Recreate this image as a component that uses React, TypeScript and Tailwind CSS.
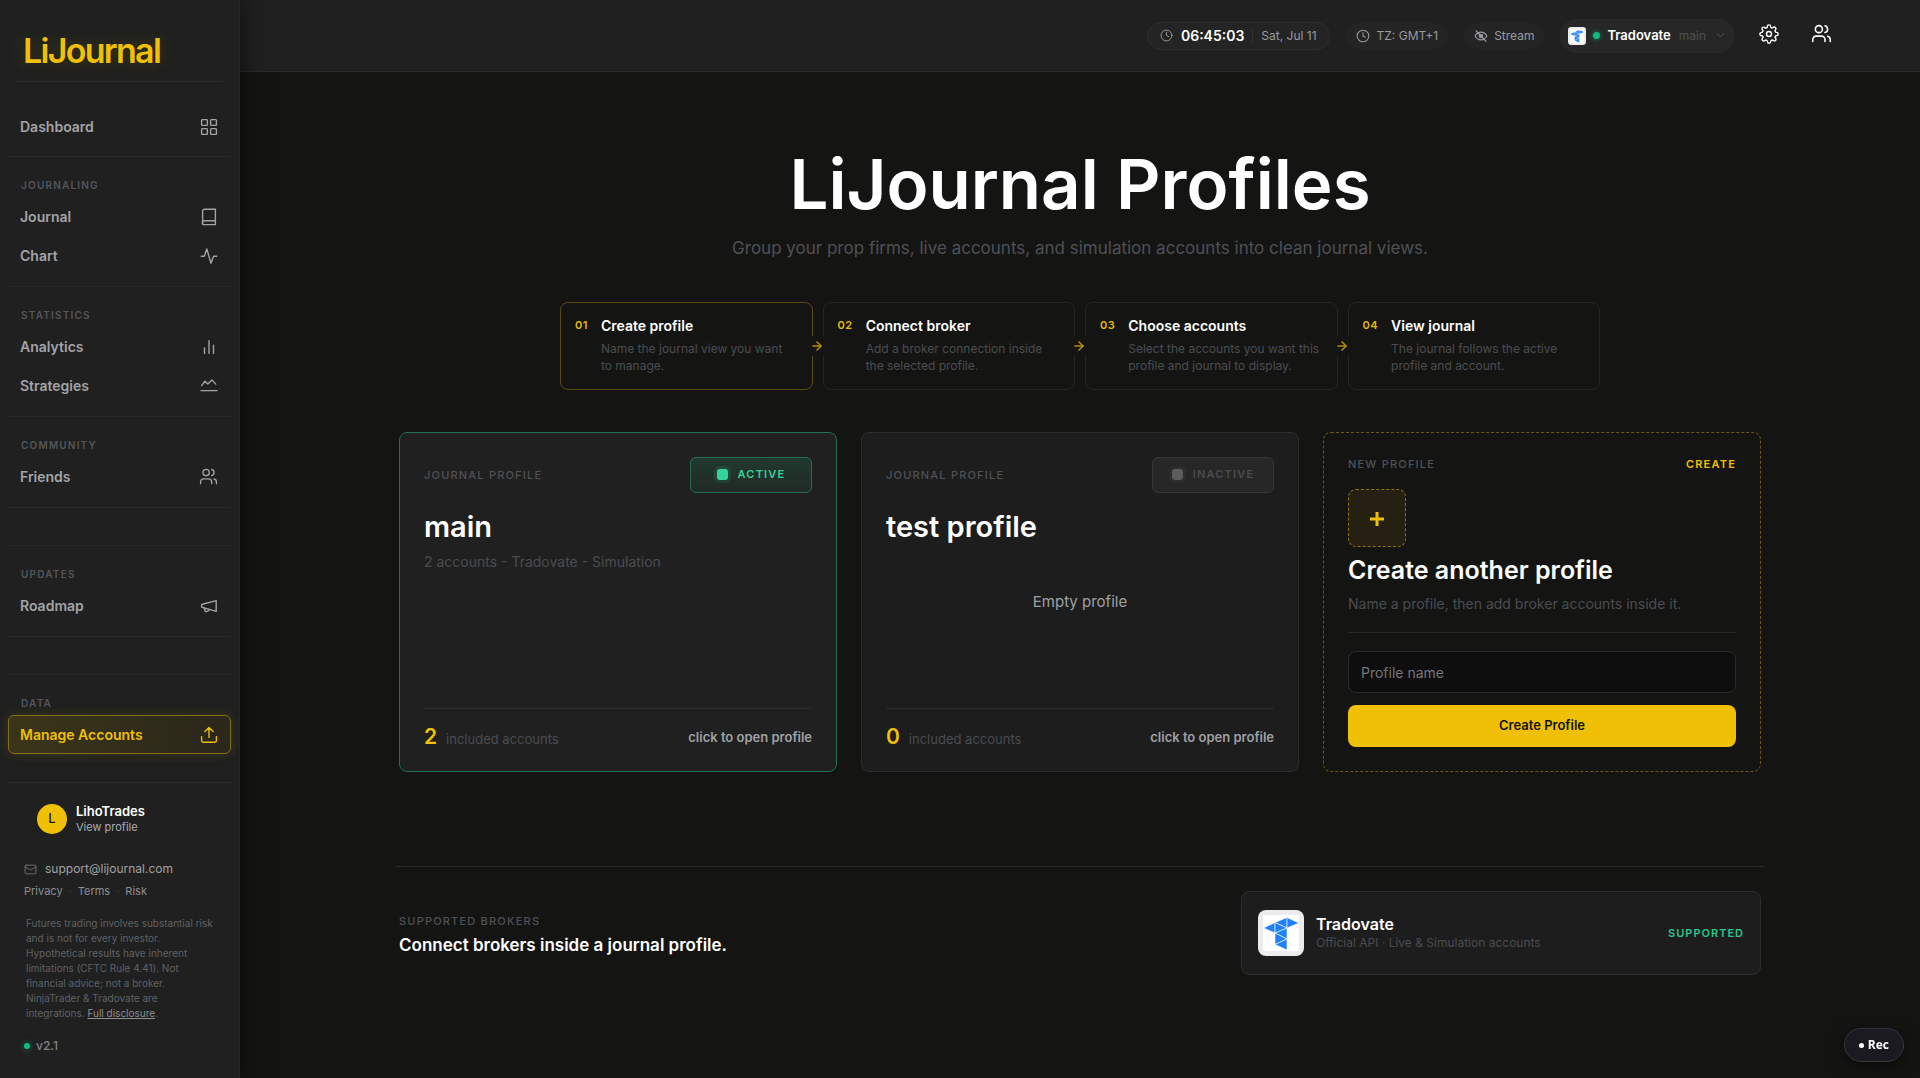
import type { ReactNode } from 'react';
import { ArrowRight, ChevronDown, Clock, Mail, Plus, Users } from 'lucide-react';
import { FiSettings } from 'react-icons/fi';

type NavItem = { label: string; icon: ReactNode; active?: boolean };
type NavSection = { title: string; items: NavItem[]; spaced?: boolean };

function Glyph({ children }: { children: ReactNode }) {
  return (
    <svg
      viewBox="0 0 18 18"
      className="size-[18px] shrink-0"
      fill="none"
      stroke="currentColor"
      strokeWidth="1.4"
      strokeLinecap="round"
      strokeLinejoin="round"
      aria-hidden="true"
    >
      {children}
    </svg>
  );
}

const GridIcon = () => (
  <Glyph>
    <rect x="1.6" y="1.6" width="5.8" height="5.8" rx="0.8" />
    <rect x="10.6" y="1.6" width="5.8" height="5.8" rx="0.8" />
    <rect x="1.6" y="10.6" width="5.8" height="5.8" rx="0.8" />
    <rect x="10.6" y="10.6" width="5.8" height="5.8" rx="0.8" />
  </Glyph>
);

const BookIcon = () => (
  <Glyph>
    <path d="M15.4 12.8V1.2H4.6a2 2 0 0 0-2 2v11.4" />
    <path d="M15.4 12.8H4.3a1.9 1.9 0 0 0 0 3.8h11.1z" />
  </Glyph>
);

const PulseIcon = () => (
  <Glyph>
    <path d="M1.2 9.2h3.1L6.8 2l4.2 14.2 2.6-7h3.2" />
  </Glyph>
);

const BarsIcon = () => (
  <Glyph>
    <path d="M4.5 10v5.4M9 2.6v12.8M13.5 7.2v8.2" />
  </Glyph>
);

const TrendIcon = () => (
  <Glyph>
    <path d="M1.6 8.6 5 4.2l2.8 2.9L12 2.9l3.8 4.2" />
    <path d="M1 13.6h16" />
  </Glyph>
);

const MegaphoneIcon = () => (
  <Glyph>
    <path d="M16.2 3.6v10.8L2.4 10.4a1 1 0 0 1-.8-1V8.2a1 1 0 0 1 .8-1z" />
    <path d="M4.2 11l.7 2.3a1.6 1.6 0 0 0 2 1.1l1.3-.5a1.6 1.6 0 0 0 .9-1.4" />
  </Glyph>
);

const UploadIcon = () => (
  <Glyph>
    <path d="M9 11.4V1.8M4.8 5.6 9 1.6l4.2 4M1.6 10.6v4a1.6 1.6 0 0 0 1.6 1.6h11.6a1.6 1.6 0 0 0 1.6-1.6v-4" />
  </Glyph>
);

const HiddenIcon = () => (
  <svg viewBox="0 0 16 16" className="size-[14px]" fill="none" stroke="currentColor" strokeWidth="1.3" strokeLinecap="round" aria-hidden="true">
    <path d="M1.2 8S3.7 3.6 8 3.6 14.8 8 14.8 8 12.3 12.4 8 12.4 1.2 8 1.2 8z" />
    <circle cx="8" cy="8" r="2" fill="currentColor" />
    <path d="M2.4 2l11.2 12" />
  </svg>
);

function TradovateMark({ className }: { className: string }) {
  return (
    <svg viewBox="0 0 46 46" className={className} role="img" aria-label="Tradovate">
      <rect width="46" height="46" rx="8" fill="#ececec" />
      <rect x="5" y="5" width="36" height="36" rx="2" fill="#ffffff" />
      <g fill="#1f80f8" stroke="#ffffff" strokeWidth="0.6" strokeLinejoin="round">
        <path d="M5.5 18 17 12.5V23z" />
        <path d="M17 12.5 29 7.5V18z" />
        <path d="M17 12.5 29 18 17 23z" />
        <path d="M29 7.5 41 13 29 18z" />
        <path d="M29 18v11L17 23z" />
        <path d="M17 23l12 6-12 5.5z" />
        <path d="M29 29v11l-12-5.5z" />
      </g>
    </svg>
  );
}

const sections: NavSection[] = [
  {
    title: 'Journaling',
    items: [
      { label: 'Journal', icon: <BookIcon /> },
      { label: 'Chart', icon: <PulseIcon /> },
    ],
  },
  {
    title: 'Statistics',
    items: [
      { label: 'Analytics', icon: <BarsIcon /> },
      { label: 'Strategies', icon: <TrendIcon /> },
    ],
  },
  {
    title: 'Community',
    items: [{ label: 'Friends', icon: <Users size={19} strokeWidth={1.7} /> }],
    spaced: true,
  },
  { title: 'Updates', items: [{ label: 'Roadmap', icon: <MegaphoneIcon /> }], spaced: true },
  { title: 'Data', items: [{ label: 'Manage Accounts', icon: <UploadIcon />, active: true }] },
];

const steps = [
  { title: 'Create profile', text: 'Name the journal view you want to manage.' },
  { title: 'Connect broker', text: 'Add a broker connection inside the selected profile.' },
  { title: 'Choose accounts', text: 'Select the accounts you want this profile and journal to display.' },
  { title: 'View journal', text: 'The journal follows the active profile and account.' },
];

function NavLink({ item }: { item: NavItem }) {
  return (
    <a
      href="#"
      aria-current={item.active ? 'page' : undefined}
      className={`flex h-[39px] items-center justify-between rounded-md border pr-3 pl-[11px] text-[14px] font-semibold ${
        item.active
          ? 'border-[#857010] bg-gradient-to-r from-[#3b3518] to-[#2a271b] text-[#efc006] shadow-[0_0_12px_rgba(240,192,0,0.15)]'
          : 'border-transparent text-[#a3a3a8]'
      }`}
    >
      {item.label}
      {item.icon}
    </a>
  );
}

function Sidebar() {
  return (
    <aside className="z-10 flex w-60 shrink-0 flex-col border-r border-[#252725] bg-[#1f201f] px-2 shadow-[0_0_24px_rgba(0,0,0,0.6)]">
      <div className="mx-2 border-b border-[#2a2b2a] px-[7px] pt-[31px] pb-[10px] text-[34px] leading-10 font-semibold tracking-tighter text-[#efc006] [text-shadow:0_0_20px_rgba(240,192,0,0.2)]">
        LiJournal
      </div>
      <nav className="pt-[25px]">
        <NavLink item={{ label: 'Dashboard', icon: <GridIcon /> }} />
        <div className="pt-[10px]">
          {sections.map((section) => (
            <div
              key={section.title}
              className={`border-t border-[#272827] pt-5 pb-[11px] ${section.spaced ? 'mb-[37px] border-b' : ''}`}
            >
              <div className="mb-1 px-[13px] text-[10px] leading-4 font-semibold tracking-[1.2px] text-[#55565c] uppercase">
                {section.title}
              </div>
              {section.items.map((item) => (
                <NavLink key={item.label} item={item} />
              ))}
            </div>
          ))}
        </div>
      </nav>
      <div className="mt-[17px] border-t border-[#2c2d2c] pt-5">
        <a href="#" className="flex items-center gap-[9px] pl-[29px]">
          <span className="flex size-[30px] items-center justify-center rounded-full bg-[#efc006] text-[13px] font-medium text-[#1a1a1a]">L</span>
          <span className="flex flex-col">
            <span className="text-[13px] leading-4 font-semibold text-white">LihoTrades</span>
            <span className="text-[11px] leading-4 text-[#a8acb6]">View profile</span>
          </span>
        </a>
        <a href="#" className="mt-6 flex items-center gap-2 pl-4 text-[12px] leading-5 text-[#a0a0a4]">
          <Mail size={13} strokeWidth={1.6} className="text-[#77777c]" />
          support@lijournal.com
        </a>
        <div className="mt-[2px] flex gap-[6px] pl-4 text-[11px] leading-5 text-[#8e8e93]">
          <a href="#">Privacy</a>
          <span className="text-[#3d3d40]">·</span>
          <a href="#">Terms</a>
          <span className="text-[#3d3d40]">·</span>
          <a href="#">Risk</a>
        </div>
        <p className="mt-[15px] px-[18px] text-[10px] leading-[15px] text-[#5f6066]">
          Futures trading involves substantial risk and is not for every investor. Hypothetical results have inherent
          limitations (CFTC Rule 4.41). Not financial advice; not a broker. NinjaTrader &amp; Tradovate are integrations.{' '}
          <a href="#" className="text-[#8e8e93] underline">
            Full disclosure
          </a>
          .
        </p>
        <div className="mt-[15px] mb-5 flex items-center gap-[6px] pl-4 text-[12px] leading-5 font-medium text-[#85858a]">
          <span className="size-[6px] rounded-full bg-[#10b981] shadow-[0_0_6px_rgba(16,185,129,0.6)]" />
          v2.1
        </div>
      </div>
    </aside>
  );
}

function Header() {
  return (
    <header className="flex h-[72px] shrink-0 items-center justify-end border-b border-[#2a2b2a] bg-[#1f201f] pr-[81px] text-[12px]">
      <div className="flex h-7 items-center gap-2 rounded-full border border-[#2d2e2d] bg-[#232423] px-3 text-[#9a9aa0]">
        <Clock size={13} strokeWidth={1.8} />
        <span className="text-[14px] font-semibold text-white">06:45:03</span>
        <span className="h-3 w-px bg-[#303130]" />
        <span className="text-[12px]">Sat, Jul 11</span>
      </div>
      <button type="button" className="ml-4 flex h-[26px] items-center gap-[7px] rounded-full bg-[#232423] px-[10px] text-[#9a9aa0]">
        <Clock size={14} strokeWidth={1.8} />
        TZ: GMT+1
      </button>
      <button type="button" className="ml-4 flex h-[26px] items-center gap-[6px] rounded-full bg-[#232423] px-[10px] text-[#9a9aa0]">
        <HiddenIcon />
        Stream
      </button>
      <button type="button" className="ml-4 flex h-[34px] items-center rounded-full bg-[#262726] px-2">
        <TradovateMark className="size-[18px]" />
        <span className="ml-[7px] size-[7px] rounded-full bg-[#10b981] shadow-[0_0_5px_rgba(16,185,129,0.7)]" />
        <span className="ml-[7px] text-[13px] font-semibold text-white">Tradovate</span>
        <span className="ml-2 text-[12px] text-[#505156]">main</span>
        <ChevronDown size={13} strokeWidth={1.5} className="ml-2 text-[#606166]" />
      </button>
      <button type="button" aria-label="Settings" className="mb-1 ml-4 flex size-9 items-center justify-center text-white">
        <FiSettings size={20} strokeWidth={1.7} />
      </button>
      <button type="button" aria-label="Friends" className="mb-1 ml-4 flex size-9 items-center justify-center text-white">
        <Users size={21} strokeWidth={1.8} />
      </button>
    </header>
  );
}

function Steps() {
  return (
    <ol className="mx-auto mt-[41px] grid max-w-[1040px] grid-cols-4 gap-[10px]">
      {steps.map((step, index) => (
        <li
          key={step.title}
          className={`relative flex h-[88px] gap-[13px] rounded-lg border px-[14px] pt-[14px] ${index === 0 ? 'border-[#574a10]' : 'border-[#242524]'}`}
        >
          <span className="shrink-0 text-[11px] leading-4 font-semibold tracking-[0.5px] text-[#e6b908]">0{index + 1}</span>
          <div className="-mr-1">
            <h2 className="text-[14px] leading-[18px] font-semibold text-white">{step.title}</h2>
            <p className="mt-[5px] max-w-[194px] text-[12px] leading-[17px] text-[#4b4c51]">{step.text}</p>
          </div>
          {index < steps.length - 1 && (
            <span className="absolute top-1/2 -right-[14px] z-10 flex h-5 w-[18px] -translate-y-1/2 items-center justify-center bg-[#141513] text-[#b08e08]">
              <ArrowRight size={14} strokeWidth={2.6} />
            </span>
          )}
        </li>
      ))}
    </ol>
  );
}

const labelClass = 'text-[11px] leading-4 font-medium tracking-[1.2px] text-[#505157] uppercase';

type ProfileCardProps = { name: string; active?: boolean; count: number; summary?: string };

function ProfileCard({ name, active = false, count, summary }: ProfileCardProps) {
  return (
    <article
      className={`flex h-[340px] flex-col rounded-lg border px-6 pt-6 ${
        active ? 'border-[#236e53] bg-[#1f201f]' : 'border-[#2c2d2c] bg-[#1c1d1c]'
      }`}
    >
      <div className="flex items-center justify-between">
        <span className={labelClass}>Journal profile</span>
        <button
          type="button"
          aria-pressed={active}
          className={`flex h-9 w-[122px] items-center justify-center gap-[10px] rounded-md border pb-[2px] text-[11px] font-semibold tracking-[1.2px] ${
            active
              ? 'border-[#256e54] bg-gradient-to-b from-[#20392e] to-[#212a26] text-[#34d399]'
              : 'border-[#353635] bg-[#262726] text-[#4b4c51]'
          }`}
        >
          <span
            className={`size-[11px] rounded-[3px] ${
              active ? 'bg-[#34d399] shadow-[0_0_0_3px_rgba(52,211,153,0.12)]' : 'bg-[#5b5c5b] shadow-[0_0_0_3px_rgba(255,255,255,0.03)]'
            }`}
          />
          {active ? 'ACTIVE' : 'INACTIVE'}
        </button>
      </div>
      <h2 className="mt-4 text-[29px] leading-9 font-semibold text-white">{name}</h2>
      {summary ? (
        <p className="mt-[5px] flex-1 text-[14px] leading-6 text-[#4b4c51]">{summary}</p>
      ) : (
        <p className="mt-[45px] flex-1 text-center text-[15px] leading-6 text-[#a0a0a4]">Empty profile</p>
      )}
      <div className="flex h-[63px] items-start justify-between border-t border-[#2b2c2b] pt-4">
        <div className="flex items-baseline gap-[9px]">
          <span className="text-[21px] leading-6 font-semibold text-[#efc006]">{count}</span>
          <span className="text-[13px] text-[#4b4c51]">included accounts</span>
        </div>
        <a href="#" className="text-[13px] leading-6 font-semibold text-[#a0a0a4]">
          click to open profile
        </a>
      </div>
    </article>
  );
}

function CreateCard() {
  return (
    <form className="flex h-[340px] flex-col rounded-lg border border-dashed border-[#6a590e] px-6 pt-[23px]">
      <div className="flex items-center justify-between">
        <span className={labelClass}>New profile</span>
        <span className="text-[11px] leading-4 font-semibold tracking-[1.2px] text-[#efc006]">CREATE</span>
      </div>
      <div className="mt-[17px] flex size-[58px] items-center justify-center rounded-lg border border-dashed border-[#8a7310] bg-[#252012] pt-[2px] text-[#efc006]">
        <Plus size={24} strokeWidth={3} strokeLinecap="butt" />
      </div>
      <h2 className="mt-2 text-[25px] leading-[30px] font-semibold text-white">Create another profile</h2>
      <p className="mt-[7px] text-[14px] leading-6 text-[#4b4c51]">Name a profile, then add broker accounts inside it.</p>
      <div className="mt-4 flex flex-col gap-3 border-t border-[#272827] pt-[18px]">
        <input
          type="text"
          aria-label="Profile name"
          placeholder="Profile name"
          className="h-[42px] rounded-lg border border-[#2a2b2a] bg-[#0d0e0d] px-3 text-[14px] text-white placeholder:text-[#75757a]"
        />
        <button type="submit" className="h-[42px] rounded-lg bg-[#efc006] text-[13px] font-semibold text-[#14140c]">
          Create Profile
        </button>
      </div>
    </form>
  );
}

function Brokers() {
  return (
    <section className="-mx-1 mt-[94px] flex items-center justify-between border-t border-[#272827] px-1 pt-6">
      <div className="pt-1">
        <div className={labelClass}>Supported brokers</div>
        <h2 className="mt-1 text-[17px] leading-6 font-semibold text-white">Connect brokers inside a journal profile.</h2>
      </div>
      <div className="flex h-[84px] w-[520px] items-center rounded-lg border border-[#2c2d2c] bg-[#1c1d1c] px-4">
        <TradovateMark className="size-[46px]" />
        <div className="ml-3 flex-1">
          <div className="text-[16px] leading-5 font-semibold text-white">Tradovate</div>
          <div className="text-[12px] leading-[18px] text-[#4b4c51]">Official API · Live &amp; Simulation accounts</div>
        </div>
        <span className="text-[11px] font-semibold tracking-[1px] text-[#2fc48d]">SUPPORTED</span>
      </div>
    </section>
  );
}

export default function App() {
  return (
    <div className="flex min-h-screen bg-[#141513] font-['Inter',sans-serif] antialiased">
      <Sidebar />
      <div className="flex min-w-0 flex-1 flex-col">
        <Header />
        <main className="mx-auto w-full max-w-[1370px] px-1 pt-[70px] pb-16">
          <h1 className="text-center text-[69px] leading-[84px] font-semibold text-white">LiJournal Profiles</h1>
          <p className="mt-[9px] text-center text-[17px] leading-[26px] text-[#4f5056]">
            Group your prop firms, live accounts, and simulation accounts into clean journal views.
          </p>
          <Steps />
          <div className="mt-[42px] grid grid-cols-3 gap-6">
            <ProfileCard name="main" active count={2} summary="2 accounts - Tradovate - Simulation" />
            <ProfileCard name="test profile" count={0} />
            <CreateCard />
          </div>
          <Brokers />
        </main>
      </div>
      <button
        type="button"
        className="fixed right-4 bottom-4 z-20 flex h-[34px] items-center gap-1 rounded-full border border-[#35353d] bg-[#1a1a20] px-[14px] font-['Open_Sans',sans-serif] text-[12px] font-bold text-white shadow-[0_4px_14px_rgba(0,0,0,0.5)]"
      >
        <span className="size-[5px] rounded-full bg-white" />
        Rec
      </button>
    </div>
  );
}
